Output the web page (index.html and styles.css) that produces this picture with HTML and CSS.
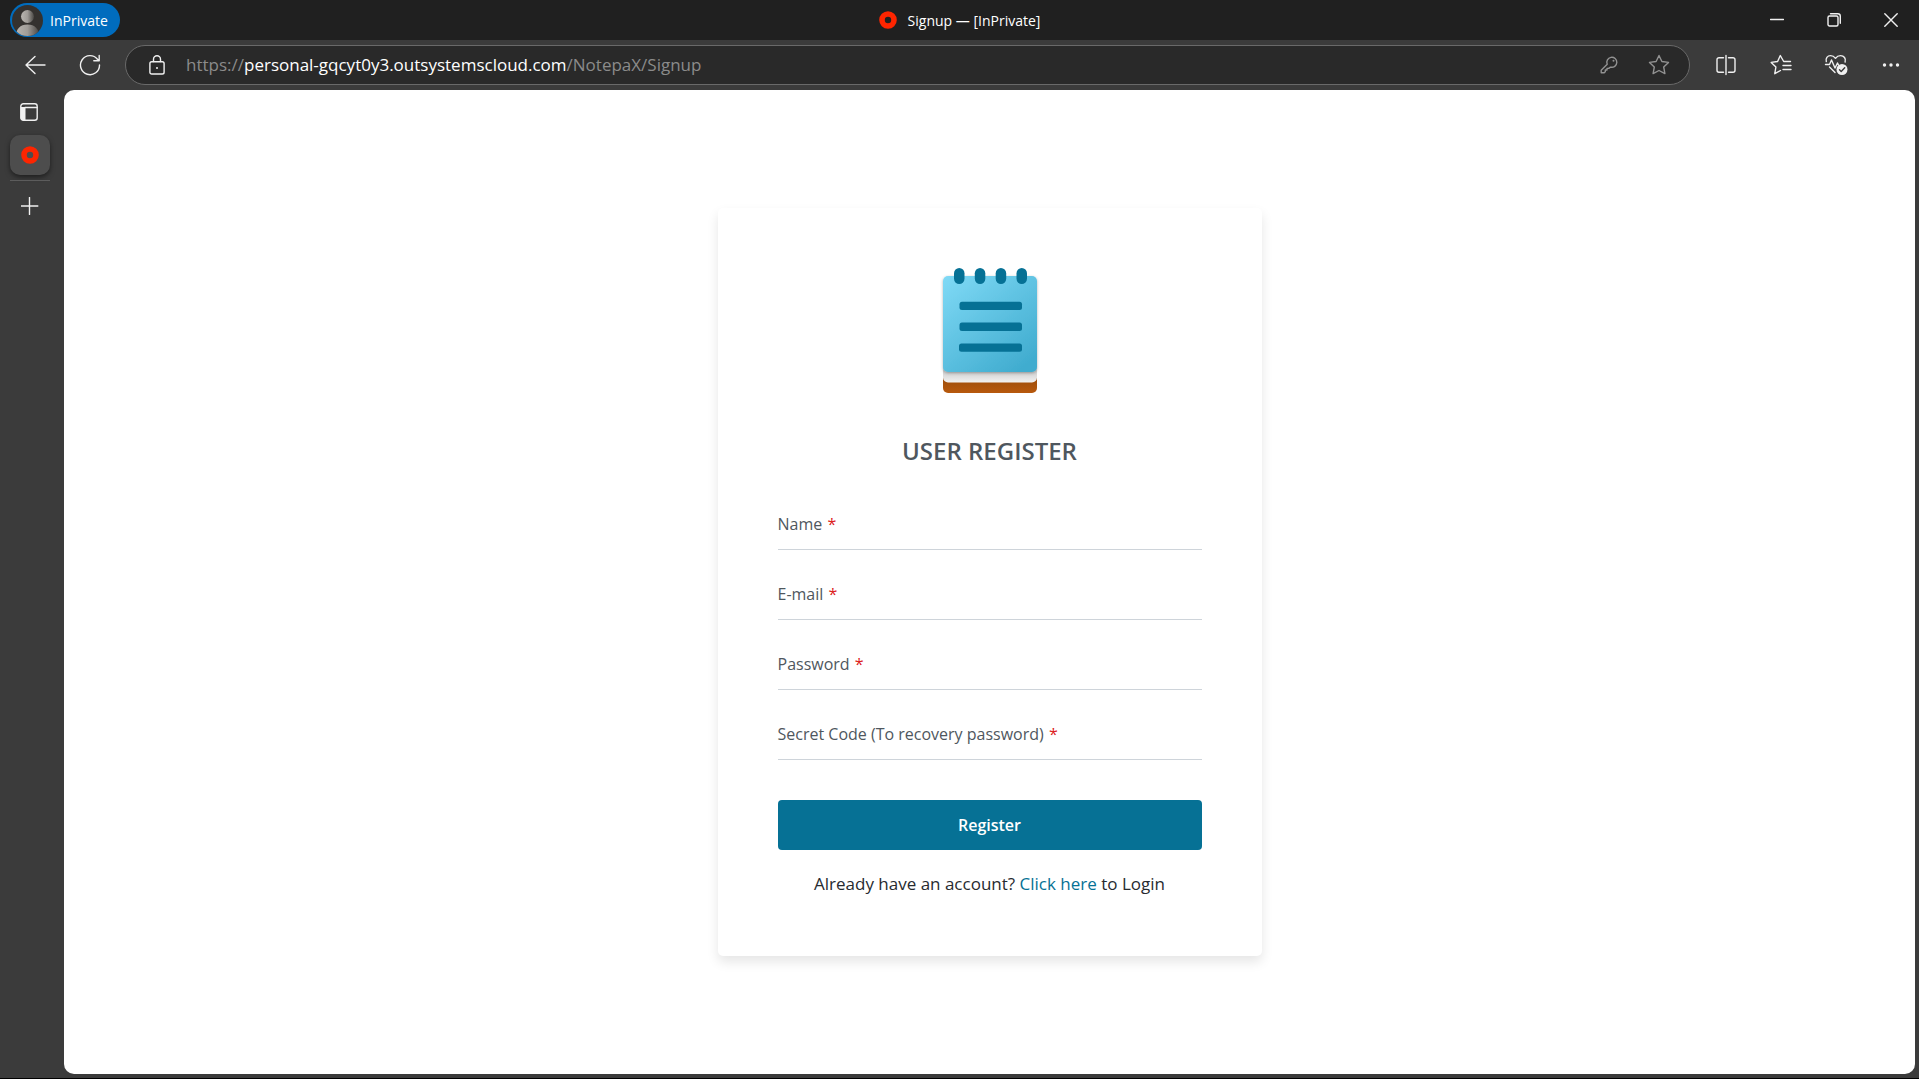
FILE: index.html
```html
<!DOCTYPE html>
<html lang="en">
<head>
<meta charset="utf-8">
<meta name="viewport" content="width=device-width, initial-scale=1">
<title>Signup</title>
<link rel="stylesheet" href="styles.css">
</head>
<body>
<div class="window">
  <header class="titlebar">
    <button class="profile" type="button">
      <svg width="31" height="31" viewBox="0 0 31 31" aria-hidden="true">
        <defs>
          <linearGradient id="person" x1="0" x2="1"><stop offset="0" stop-color="#b9b5b0"/><stop offset=".5" stop-color="#a09c98"/><stop offset="1" stop-color="#4a4744"/></linearGradient>
          <clipPath id="disc"><circle cx="15.500" cy="15.500" r="15.500"/></clipPath>
        </defs>
        <circle cx="15.500" cy="15.500" r="15.500" fill="#34312f"/>
        <g clip-path="url(#disc)" fill="url(#person)">
          <circle cx="15.500" cy="11.500" r="6.500"/>
          <path d="M4 31c0-7 4-11.500 11.500-11.500S27 24 27 31z"/>
        </g>
      </svg>
      <span>InPrivate</span>
    </button>
    <div class="caption">
      <svg width="18" height="18" viewBox="0 0 18 18" aria-hidden="true"><circle cx="9" cy="9" r="6" fill="none" stroke="#fe2500" stroke-width="5.600"/></svg>
      <span>Signup — [InPrivate]</span>
    </div>
    <div class="window-controls">
      <button type="button" aria-label="Minimize"><svg width="14" height="14" viewBox="0 0 14 14"><path d="M.5 6.500h13"/></svg></button>
      <button type="button" aria-label="Restore"><svg width="14" height="14" viewBox="0 0 14 14"><rect x="1" y="3" width="10" height="10" rx="1.500"/><path d="M3.500.8h7.300a2.500 2.500 0 0 1 2.500 2.500v7"/></svg></button>
      <button type="button" aria-label="Close"><svg width="14" height="14" viewBox="0 0 14 14"><path d="M.8.8l12.400 12.400M13.200.8L.8 13.200"/></svg></button>
    </div>
  </header>

  <nav class="toolbar" aria-label="Browser">
    <div class="tools">
      <button type="button" aria-label="Back"><svg width="22" height="22" viewBox="0 0 22 22"><path d="M21 11H2M11 2.500L2 11l9 8.500"/></svg></button>
      <button type="button" aria-label="Refresh"><svg width="22" height="22" viewBox="0 0 22 22"><path d="M20.500 11a9.500 9.500 0 1 1-2-5.700l1.500 1.500M20.200 1.500v5.300h-5.400"/></svg></button>
    </div>
    <div class="address">
      <svg width="16" height="20" viewBox="0 0 16 20" aria-hidden="true" class="lock"><rect x=".9" y="6.700" width="14.200" height="12.300" rx="1.800"/><path d="M4.500 6.500V4.300a3.500 3.500 0 0 1 7 0v2.200"/><circle cx="8" cy="12.900" r="1" class="solid"/></svg>
      <p class="url">https://<b>personal-gqcyt0y3.outsystemscloud.com</b>/NotepaX/Signup</p>
      <div class="address-tools">
        <button type="button" aria-label="Saved passwords"><svg width="20" height="20" viewBox="0 0 20 20"><path d="M8.200 9.200A5 5 0 1 1 11.500 12.100L9.700 13.400H8V15H6.300v1.800L5.200 17.800H2.200V15.200z"/><circle cx="14.500" cy="5.700" r="1" class="solid"/></svg></button>
        <button type="button" aria-label="Add to favorites"><svg width="22" height="22" viewBox="0 0 22 22"><path d="M11 1.500l2.900 6 6.600.9-4.800 4.600 1.200 6.600-5.900-3.100-5.900 3.100L6.300 13 1.500 8.400l6.600-.9z"/></svg></button>
      </div>
    </div>
    <div class="tools">
      <button type="button" aria-label="Split screen"><svg width="20" height="22" viewBox="0 0 20 22"><path d="M7.500 3.700H3A2 2 0 0 0 1 5.700v10.600a2 2 0 0 0 2 2h4.500M12.500 3.700H17a2 2 0 0 1 2 2v10.600a2 2 0 0 1-2 2h-4.500M10 1.500v19"/></svg></button>
      <button type="button" aria-label="Favorites"><svg width="22" height="22" viewBox="0 0 22 22"><path d="M20.500 7.500h-6.800L10.300 1.500l-2.700 6L1.200 8.400l4.700 4.600-1.100 6.700 5.700-3.200M13 11.500h8M13 15.500h8"/></svg></button>
      <button type="button" aria-label="Browser essentials"><svg width="24" height="22" viewBox="0 0 24 22"><path d="M2.300 7.500C1.300 4.300 3.500 1.600 6.500 1.600c2 0 3.700.9 5 2.700 1.300-1.800 3-2.700 5-2.700 3.500 0 5.700 3 4.600 6.400M1.500 10.500h4l2-4.500 3.500 8 2.500-5 1 2M5.500 13l5.500 5.500"/><circle cx="18" cy="15.500" r="5.500" class="solid"/><path class="tick" d="M15.500 15.700l1.700 1.700 3.500-3.700"/></svg></button>
      <button type="button" aria-label="More"><svg width="18" height="6" viewBox="0 0 18 6"><g class="solid"><circle cx="2.500" cy="3" r="1.700"/><circle cx="9" cy="3" r="1.700"/><circle cx="15.500" cy="3" r="1.700"/></g></svg></button>
    </div>
  </nav>

  <div class="workspace">
    <aside class="tabs">
      <button type="button" class="tab" aria-label="Tab actions"><svg width="20" height="20" viewBox="0 0 20 20"><rect x=".8" y="1.800" width="16.400" height="16.400" rx="2.500"/><path d="M5 5.500h12"/><path class="solid" d="M.8 5h4.700v13.200H2.800a2 2 0 0 1-2-2z"/></svg></button>
      <button type="button" class="tab tab-active" aria-label="Signup"><svg width="18" height="18" viewBox="0 0 18 18"><circle cx="9" cy="9" r="6" stroke="#fe2500" stroke-width="5.600"/></svg></button>
      <hr>
      <button type="button" class="tab" aria-label="New tab"><svg width="18" height="18" viewBox="0 0 18 18"><path d="M8.500 .5v17M.2 9h16.600"/></svg></button>
    </aside>

    <main class="page">
      <form class="card">
        <svg class="logo" width="104" height="125" viewBox="0 0 104 125" aria-hidden="true">
          <defs>
            <linearGradient id="cover" x1="0" y1="0" x2=".8" y2="1"><stop offset="0" stop-color="#80daf6"/><stop offset="1" stop-color="#40accf"/></linearGradient>
            <linearGradient id="sheet" x1="0" y1="0" x2="0" y2="1"><stop offset=".55" stop-color="#cfcfcf"/><stop offset="1" stop-color="#f2f2f2"/></linearGradient>
            <linearGradient id="base" x1="0" y1="0" x2="0" y2="1"><stop offset=".3" stop-color="#944a0c"/><stop offset="1" stop-color="#b8590d"/></linearGradient>
            <filter id="soft" x="-10%" y="-10%" width="120%" height="120%"><feDropShadow dx="0" dy="1" stdDeviation="1.500" flood-opacity=".3"/></filter>
          </defs>
          <path fill="url(#base)" d="M5 98h94v22a5 5 0 0 1-5 5H10a5 5 0 0 1-5-5z"/>
          <path fill="url(#sheet)" d="M5 90h94v19.500a5 5 0 0 1-5 5H10a5 5 0 0 1-5-5z"/>
          <rect x="5" y="8" width="94" height="96" rx="5" fill="url(#cover)" filter="url(#soft)"/>
          <g fill="#067195">
            <rect x="16" width="10.500" height="16" rx="5.250"/><rect x="36.800" width="10.500" height="16" rx="5.250"/><rect x="57.700" width="10.500" height="16" rx="5.250"/><rect x="78.500" width="10.500" height="16" rx="5.250"/>
            <rect x="21.500" y="33.700" width="62.500" height="8.300" rx="2.500"/><rect x="21.500" y="54.600" width="62.500" height="8.300" rx="2.500"/><rect x="21" y="75.400" width="63" height="8.300" rx="2.500"/>
          </g>
        </svg>
        <h1>USER REGISTER</h1>
        <div class="fields">
          <div class="field"><label for="name">Name <span>*</span></label><input id="name" type="text" required></div>
          <div class="field"><label for="email">E-mail <span>*</span></label><input id="email" type="email" required></div>
          <div class="field"><label for="password">Password <span>*</span></label><input id="password" type="password" required></div>
          <div class="field"><label for="code">Secret Code (To recovery password) <span>*</span></label><input id="code" type="text" required></div>
        </div>
        <button class="submit" type="submit">Register</button>
        <p class="login">Already have an account? <a href="#login">Click here</a> to Login</p>
      </form>
    </main>
  </div>
</div>
</body>
</html>
```

FILE: styles.css
```css
* {
  box-sizing: border-box;
}

body {
  margin: 0;
  font-family: "Open Sans", "Noto Sans", sans-serif;
  color: #272b30;
}

button {
  font: inherit;
  color: inherit;
  background: none;
  border: 0;
  padding: 0;
}

.window {
  min-height: 100vh;
  display: flex;
  flex-direction: column;
  background: #3b3b3b;
  border-bottom: 1px solid #000;
}

.window-controls svg,
.tools svg,
.address svg,
.tabs svg {
  fill: none;
  stroke: #f0f0f0;
  stroke-width: 1.4;
  stroke-linecap: round;
  stroke-linejoin: round;
}

.window .solid {
  fill: #f0f0f0;
  stroke: none;
}

.window .tick {
  stroke: #3b3b3b;
}

/* Title bar */
.titlebar {
  height: 40px;
  display: grid;
  grid-template-columns: 1fr auto 1fr;
  align-items: center;
  background: #202020;
  color: #fff;
  font-size: 14px;
}

.profile {
  justify-self: start;
  display: flex;
  align-items: center;
  gap: 7px;
  height: 34px;
  margin-left: 10px;
  padding: 0 12px 0 2px;
  border-radius: 17px;
  background: #006cbe;
}

.caption {
  display: flex;
  align-items: center;
  gap: 11px;
}

.window-controls {
  justify-self: end;
  display: flex;
}

.window-controls button {
  width: 57px;
  height: 40px;
  display: grid;
  place-items: center;
}

/* Toolbar */
.toolbar {
  height: 50px;
  display: flex;
  align-items: center;
  gap: 8px;
  padding: 0 1px 0 7px;
}

.tools {
  display: flex;
}

.tools button {
  width: 55px;
  height: 40px;
  display: grid;
  place-items: center;
}

.address {
  flex: 1;
  min-width: 0;
  height: 40px;
  display: flex;
  align-items: center;
  padding: 0 5px 0 23px;
  border: 1px solid #696969;
  border-radius: 20px;
  background: #292929;
}

.url {
  flex: 1;
  min-width: 0;
  margin: 0 0 0 21px;
  padding-bottom: 2px;
  overflow: hidden;
  white-space: nowrap;
  font-size: 17px;
  color: #8b8b8b;
}

.url b {
  font-weight: 400;
  color: #fff;
}

.address-tools {
  display: flex;
}

.address-tools button {
  width: 50px;
  height: 38px;
  display: grid;
  place-items: center;
}

.address .address-tools svg {
  stroke: #929292;
}

.address-tools .solid {
  fill: #929292;
}

/* Tab strip and page */
.workspace {
  flex: 1;
  display: flex;
  padding: 0 4px 4px 0;
}

.tabs {
  width: 64px;
  padding: 2px 14px 0 10px;
}

.tab {
  width: 40px;
  height: 40px;
  display: grid;
  place-items: center;
}

.tab-active {
  margin-top: 3px;
  border-radius: 10px;
  background: #4d4d4d;
  box-shadow: 0 2px 5px rgba(0, 0, 0, 0.5);
}

.tabs hr {
  margin: 5px 0;
  border: 0;
  border-top: 1px solid #5c5c5c;
}

.page {
  flex: 1;
  display: grid;
  place-items: center;
  padding: 24px;
  border-radius: 10px;
  background: #fff;
}

.card {
  width: 100%;
  max-width: 544px;
  display: flex;
  flex-direction: column;
  align-items: stretch;
  padding: 60px;
  border-radius: 5px;
  background: #fff;
  box-shadow: 0 6px 12px rgba(0, 0, 0, 0.1);
}

.logo {
  align-self: center;
}

.card h1 {
  margin: 40px 0 31px;
  font-size: 24px;
  line-height: 36px;
  font-weight: 600;
  text-align: center;
  color: #4f575e;
}

.fields {
  display: grid;
  gap: 20px;
}

.field {
  display: grid;
}

.field label,
.field input {
  grid-area: 1 / 1;
}

.field label {
  align-self: end;
  padding-bottom: 14px;
  font-size: 16px;
  line-height: 24px;
  color: #4f575e;
  pointer-events: none;
}

.field label span {
  margin-left: 1px;
  color: #dc2020;
}

.field input {
  width: 100%;
  height: 50px;
  padding: 0;
  border: 0;
  border-bottom: 1px solid #ced4da;
  border-radius: 0;
  background: none;
  font: inherit;
  outline: 0;
  box-shadow: none;
}

.field:focus-within label {
  align-self: start;
  padding: 0;
  font-size: 12px;
  line-height: 16px;
}

.submit {
  height: 50px;
  margin-top: 40px;
  border-radius: 4px;
  background: #067195;
  color: #fff;
  font-size: 16px;
  font-weight: 600;
}

.login {
  margin: 22px 0 0;
  font-size: 17px;
  line-height: 24px;
  text-align: center;
}

.login a {
  color: #067195;
  text-decoration: none;
}
```
